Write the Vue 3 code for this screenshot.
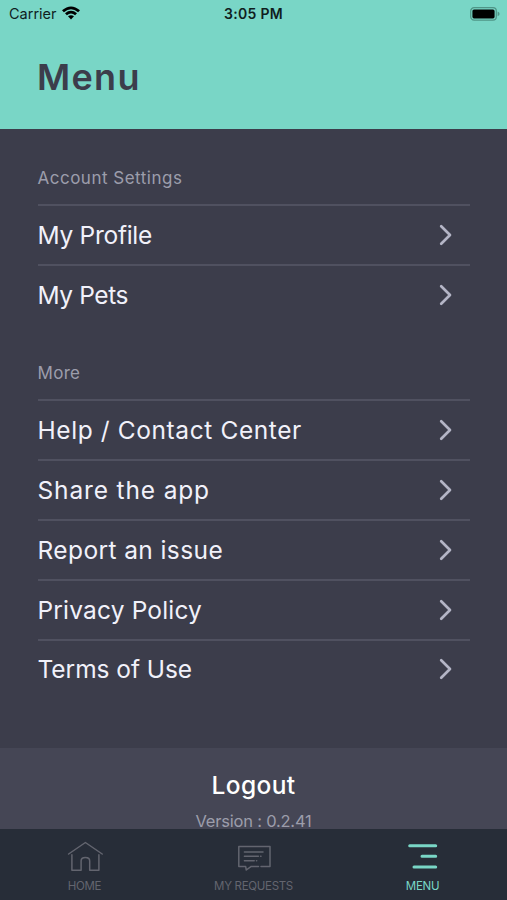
<script setup>
const sections = [
  {
    title: 'Account Settings',
    spacing: 0.5,
    items: [
      { label: 'My Profile', spacing: -0.28 },
      { label: 'My Pets', spacing: -0.4 },
    ],
  },
  {
    title: 'More',
    spacing: 0.3,
    items: [
      { label: 'Help / Contact Center', spacing: 0.6 },
      { label: 'Share the app', spacing: 0.85 },
      { label: 'Report an issue', spacing: 0.4 },
      { label: 'Privacy Policy', spacing: 0.17 },
      { label: 'Terms of Use', spacing: -0.05 },
    ],
  },
]
</script>

<template>
  <div class="screen">
    <header class="header">
      <div class="status">
        <div class="carrier">
          <span class="carrier-name">Carrier</span>
          <svg class="wifi" width="18" height="14" viewBox="0 0 18 14">
            <path d="M0 4.3Q9-3.5 18 4.3L16.1 6.2Q9 .3 1.9 6.2Z" />
            <path d="M3 7.3Q9 2.4 15 7.3L13.1 9.2Q9 6 4.9 9.2Z" />
            <path d="M6 10.3Q9 8 12 10.3L9 13.4Z" />
          </svg>
        </div>
        <span class="clock">3:05 PM</span>
        <svg class="battery" width="30" height="14" viewBox="0 0 30 14">
          <rect x=".7" y=".7" width="25.6" height="12.4" rx="3.4" fill="none" stroke="#4f9587" stroke-width="1.3" />
          <rect x="2.4" y="2.4" width="22.2" height="9" rx="1.6" fill="#000" />
          <path d="M27.6 4.5Q29.6 5.4 29.6 6.9Q29.6 8.4 27.6 9.3Z" fill="#4f9587" />
        </svg>
      </div>
      <h1 class="title">Menu</h1>
    </header>

    <main class="content">
      <section v-for="s in sections" :key="s.title" class="section">
        <h2 class="section-title" :style="{ letterSpacing: s.spacing + 'px' }">{{ s.title }}</h2>
        <div v-for="i in s.items" :key="i.label" class="row">
          <span :style="{ letterSpacing: i.spacing + 'px' }">{{ i.label }}</span>
          <svg class="chevron" width="14" height="22" viewBox="0 0 14 22">
            <path d="M2.2 2.3L11 11L2.2 19.7" />
          </svg>
        </div>
      </section>
    </main>

    <section class="account">
      <div class="logout">Logout</div>
      <div class="version">Version : 0.2.41</div>
    </section>

    <nav class="tabs">
      <div class="tab">
        <svg width="36" height="32" viewBox="0 0 36 32">
          <path d="M1.6 14L18.4 2.5L35.2 14M4.9 14.8V30.3H14.1V20.9Q14.1 17.5 18.4 17.5Q22.7 17.5 22.7 20.9V30.3H31.9V14.8" />
        </svg>
        <span class="home-label">HOME</span>
      </div>
      <div class="tab">
        <svg width="36" height="32" viewBox="0 0 36 32">
          <path d="M25 26.4H34V6.4H2.8V26.4H9.6L10.3 30L15.2 26.4H22.5M8.4 12H27M8.4 16.3H22.4M24.6 16.3H25M8.4 20.7H18.2M20.5 20.7H20.7" />
        </svg>
        <span class="requests-label">MY REQUESTS</span>
      </div>
      <div class="tab active">
        <svg width="36" height="32" viewBox="0 0 36 32">
          <path d="M4.7 5.7H30.7M17 16.3H30.7M9 27H30.7" />
        </svg>
        <span class="menu-label">MENU</span>
      </div>
    </nav>
  </div>
</template>

<style>
body {
  margin: 0;
  background: #3c3d4b;
}
</style>

<style scoped>
.screen {
  width: 507px;
  height: 900px;
  display: flex;
  flex-direction: column;
  overflow: hidden;
  background: #3c3d4b;
  font-family: Inter, "Liberation Sans", sans-serif;
}
.header {
  box-sizing: border-box;
  height: 129px;
  flex: none;
  background: #79d6c6;
}
.status {
  box-sizing: border-box;
  height: 27px;
  display: grid;
  grid-template-columns: 1fr auto 1fr;
  align-items: center;
  padding: 0 7px 0 9px;
  color: #101e1e;
  font-size: 14.5px;
}
.carrier {
  display: flex;
  align-items: center;
  gap: 5px;
}
.wifi {
  fill: #000;
  margin-top: -1px;
}
.clock {
  margin-right: 2px;
  font-weight: 600;
  font-size: 14px;
  letter-spacing: 0.3px;
}
.battery {
  justify-self: end;
}
.title {
  margin: 25px 0 0 37px;
  font-size: 36px;
  line-height: 50px;
  font-weight: 600;
  letter-spacing: 1.3px;
  color: #3c3d4b;
}
.content {
  box-sizing: border-box;
  height: 619px;
  flex: none;
  padding: 26.2px 37px 0 37.5px;
}
.section + .section {
  margin-top: 26.3px;
}
.section-title {
  margin: 0;
  height: 49px;
  line-height: 46px;
  font-size: 17px;
  font-weight: 400;
  color: #9c9dab;
}
.row {
  box-sizing: border-box;
  height: 59.85px;
  border-top: 2px solid #505160;
  padding-right: 17px;
  display: flex;
  justify-content: space-between;
  align-items: center;
  font-size: 24.5px;
  color: #f1f1fa;
}
.row span {
  line-height: 30px;
}
.chevron {
  fill: none;
  stroke: #b4b5c6;
  stroke-width: 2.7;
  stroke-linecap: round;
  stroke-linejoin: round;
}
.account {
  height: 81px;
  flex: none;
  background: #454655;
  text-align: center;
}
.logout {
  padding-top: 20px;
  line-height: 34px;
  font-size: 24.5px;
  font-weight: 500;
  letter-spacing: 0.4px;
  color: #fff;
}
.version {
  margin-top: 11px;
  line-height: 16px;
  font-size: 16.5px;
  letter-spacing: -0.2px;
  color: #9c9dab;
}
.tabs {
  height: 71px;
  flex: none;
  display: grid;
  grid-template-columns: repeat(3, 1fr);
  background: #272d38;
}
.tab {
  display: flex;
  flex-direction: column;
  align-items: center;
  padding-top: 11px;
  font-size: 11.5px;
  line-height: 28px;
  letter-spacing: -0.3px;
  color: #63656f;
}
.tab svg {
  fill: none;
  stroke: #63656f;
  stroke-width: 1.5;
  stroke-linecap: round;
  stroke-linejoin: round;
}
.tab.active {
  color: #79d6c6;
}
.tab.active svg {
  stroke: #79d6c6;
  stroke-width: 3;
}
</style>
